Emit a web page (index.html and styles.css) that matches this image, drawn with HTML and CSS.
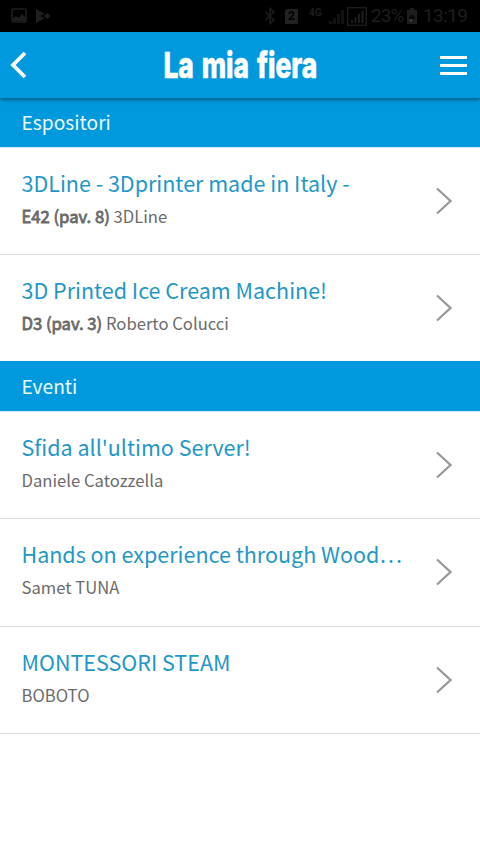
FILE: index.html
```html
<!DOCTYPE html>
<html lang="it">
<head>
<meta charset="utf-8">
<title>La mia fiera</title>
<link rel="stylesheet" href="styles.css">
</head>
<body>
<div class="status">
  <div class="status-left">
    <svg width="16" height="16" viewBox="0 0 16 16"><rect x="1" y="1" width="14" height="13" rx="1" fill="none" stroke="currentColor" stroke-width="1.6"/><path d="M2 13V10l3-2 3 2 3-4 3 3v4z" fill="currentColor"/></svg>
    <svg width="16" height="16" viewBox="0 0 16 16"><path d="M0 1l9 5-5 2 5 2-9 5z" fill="currentColor"/><path d="M11 5l4 3-4 3-3-3z" fill="currentColor"/></svg>
  </div>
  <div class="status-right">
    <svg class="bt" width="12" height="18" viewBox="0 0 12 18"><path d="M1.500 5l8.500 8-4 3.500v-15L10 5l-8.500 8" fill="none" stroke="currentColor" stroke-width="1.5"/></svg>
    <span class="sim">2</span>
    <span class="net">4G</span>
    <svg class="sig" width="15" height="15" viewBox="0 0 15 15"><path d="M0 15v-3h3v3zM4 15v-6h3v6zM8 15V5h3v10zM12 15V1h3v14z" fill="currentColor" opacity=".6"/></svg>
    <svg class="sig-box" width="20" height="19" viewBox="0 0 20 19"><rect x=".7" y=".7" width="18.600" height="17.600" fill="none" stroke="currentColor" stroke-width="1.300"/><path d="M4 16v-3h2v3zM7.500 16v-6h2v6zM11 16V7h2v9zM14.500 16V4h2v12z" fill="currentColor"/></svg>
    <span class="pct">23%</span>
    <svg class="bat" width="10" height="16" viewBox="0 0 10 16"><path d="M3 0h4v2h3v14H0V2h3z" fill="currentColor"/><path d="M2 9l3-3 3 3v2H2z" fill="#080808"/><circle cx="4" cy="12.500" r="1" fill="#555"/></svg>
    <span class="clock">13:19</span>
  </div>
</div>
<header class="bar">
  <svg class="back" width="18" height="28" viewBox="0 0 18 28"><path d="M17 2L5 14 17 26" fill="none" stroke="#fff" stroke-width="3.800"/></svg>
  <h1 class="title"><span>La mia fiera</span></h1>
  <div class="menu"><i></i><i></i><i></i></div>
</header>
<main>
  <h2 class="section">Espositori</h2>
  <div class="row"><div class="text"><div class="name">3DLine - 3Dprinter made in Italy -</div><div class="sub"><b>E42 (pav. 8)</b> 3DLine</div></div><svg class="chev" width="18" height="28" viewBox="0 0 18 28"><path d="M2 1.500L15.500 14 2 26.500"/></svg></div>
  <div class="row"><div class="text"><div class="name">3D Printed Ice Cream Machine!</div><div class="sub"><b>D3 (pav. 3)</b> Roberto Colucci</div></div><svg class="chev" width="18" height="28" viewBox="0 0 18 28"><path d="M2 1.500L15.500 14 2 26.500"/></svg></div>
  <h2 class="section events">Eventi</h2>
  <div class="row"><div class="text"><div class="name">Sfida all'ultimo Server!</div><div class="sub">Daniele Catozzella</div></div><svg class="chev" width="18" height="28" viewBox="0 0 18 28"><path d="M2 1.500L15.500 14 2 26.500"/></svg></div>
  <div class="row"><div class="text"><div class="name">Hands on experience through Wood…</div><div class="sub">Samet TUNA</div></div><svg class="chev" width="18" height="28" viewBox="0 0 18 28"><path d="M2 1.500L15.500 14 2 26.500"/></svg></div>
  <div class="row"><div class="text"><div class="name">MONTESSORI STEAM</div><div class="sub">BOBOTO</div></div><svg class="chev" width="18" height="28" viewBox="0 0 18 28"><path d="M2 1.500L15.500 14 2 26.500"/></svg></div>
  <div class="end"></div>
</main>
</body>
</html>
```
FILE: styles.css
```css
* { box-sizing: border-box; }
body {
  margin: 0;
  height: 853px;
  overflow: hidden;
  background: #fff;
  font-family: "Noto Sans CJK SC", "Noto Sans", sans-serif;
}
svg { display: block; flex: none; overflow: visible; }
.status {
  height: 32px;
  background: #000;
  color: #1e1e1e;
  display: flex;
  justify-content: space-between;
  align-items: center;
  padding: 0 13px 0 11px;
  font-family: Roboto, sans-serif;
}
.status-left { display: flex; gap: 9px; }
.status-right { display: flex; align-items: center; }
.sim {
  width: 13px;
  height: 15px;
  margin-left: 9px;
  background: #222;
  color: #000;
  border-radius: 3px 1px 1px 1px;
  font: bold 12px/15px Roboto, sans-serif;
  text-align: center;
}
.net { font-size: 10px; font-weight: bold; margin: -8px 0 0 11px; width: 14px; }
.sig { margin-left: 6px; }
.sig-box { margin-left: 3px; }
.pct, .clock { font-size: 19px; line-height: 32px; white-space: nowrap; }
.pct { margin-left: 4px; width: 33px; letter-spacing: -.9px; }
.bat { margin-left: 3px; }
.clock { margin-left: 6px; width: 44px; letter-spacing: -.6px; }
.bar {
  height: 66px;
  background: #0099de;
  display: flex;
  align-items: center;
  justify-content: space-between;
  padding: 0 13px 0 8px;
  position: relative;
  box-shadow: 0 2px 4px rgba(0, 0, 0, .4);
}
.title {
  margin: 0 0 0 15px;
  width: 240px;
  display: flex;
  justify-content: center;
  color: #fff;
  font: 800 36px/56px Inter, sans-serif;
  white-space: nowrap;
}
.title span { transform: scaleX(.73); word-spacing: 3px; -webkit-text-stroke: .6px #fff; }
.menu { width: 27px; display: grid; gap: 5px; }
.menu i { height: 3px; background: #fff; }
.section {
  margin: 0;
  height: 49px;
  padding-left: 21.500px;
  background: #0099de;
  color: #eefaff;
  font-size: 19.200px;
  font-weight: 400;
  line-height: 49px;
}
.section.events { height: 50px; line-height: 51px; }
.row {
  height: 107.333px;
  display: flex;
  align-items: center;
  justify-content: space-between;
  padding: 0 27px 0 21.500px;
  border-top: 1px solid #dcdcdc;
}
.row:nth-child(-n+3) { height: 107px; }
.section + .row { border-top-color: #cdebf8; }
.text { min-width: 0; padding-bottom: 5px; }
.name {
  color: #1f97c7;
  font-size: 21.500px;
  line-height: 36px;
  white-space: nowrap;
}
.sub { color: #6b6b6b; font-size: 16.650px; line-height: 31px; white-space: nowrap; }
.sub b { font-weight: 400; -webkit-text-stroke: .8px #6b6b6b; }
.chev path { fill: none; stroke: #999; stroke-width: 2.300px; }
.end { height: 1px; background: #dcdcdc; }
```
